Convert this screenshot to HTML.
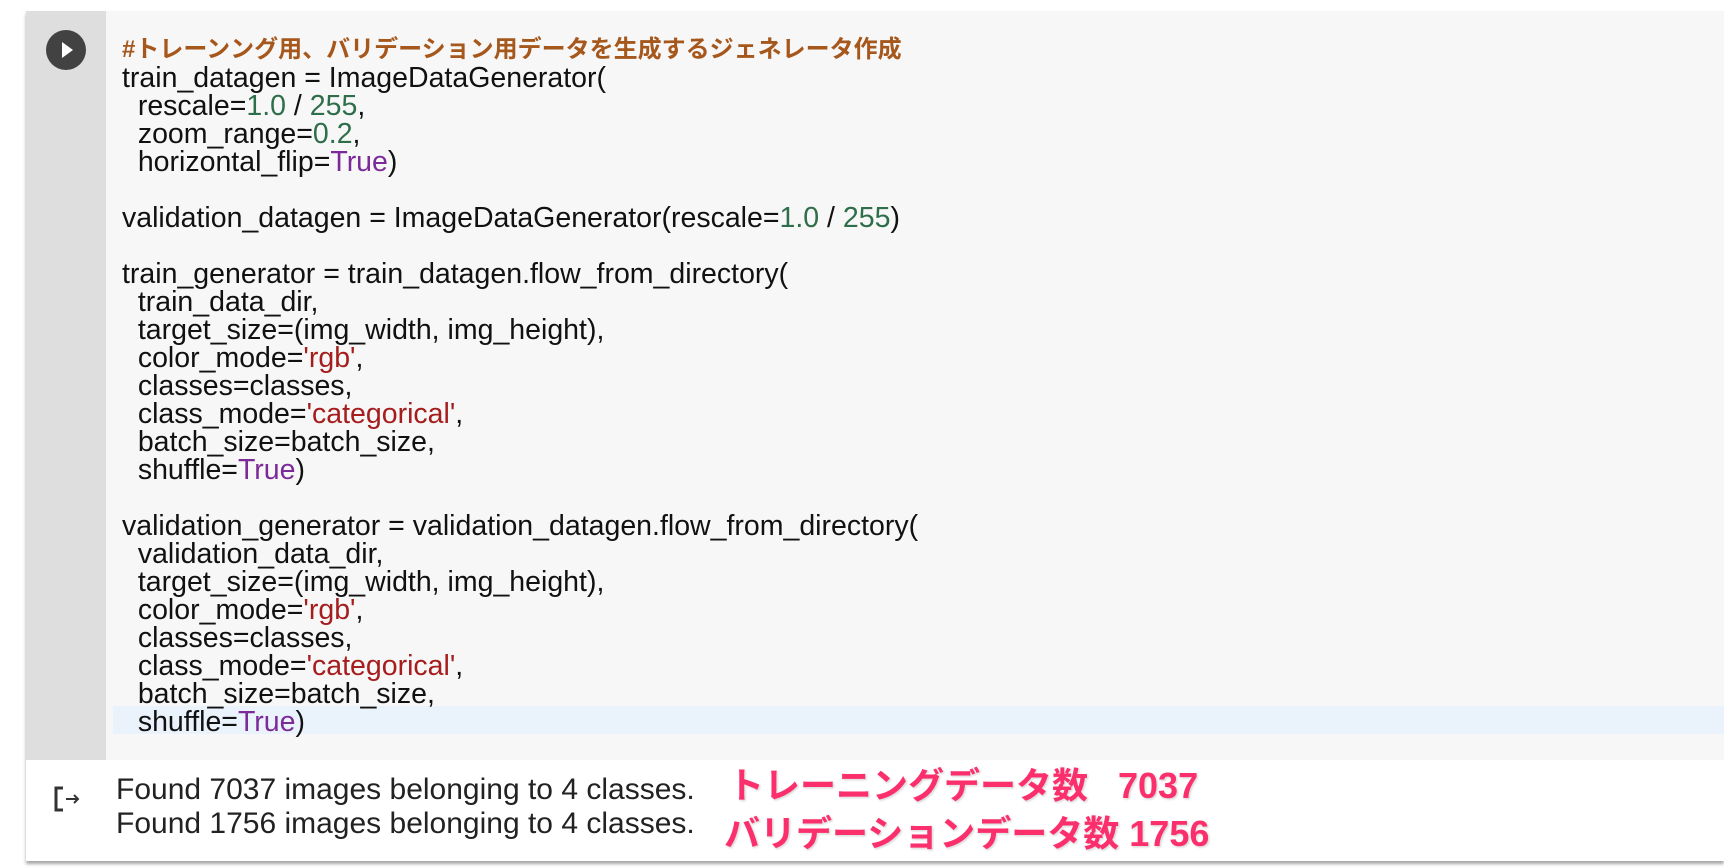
<!DOCTYPE html>
<html><head><meta charset="utf-8"><style>
html,body{margin:0;padding:0;background:#fff;width:1724px;height:868px;overflow:hidden}
.cell{position:absolute;left:26px;top:11px;right:0;height:850px;background:#fff;box-shadow:0 3px 3px rgba(0,0,0,.35)}
.gut{position:absolute;left:26px;top:11px;width:80px;height:749px;background:#dedede}
.code{position:absolute;left:106px;top:11px;right:0;height:749px;background:#f7f7f7}
.hl{position:absolute;left:113px;top:706px;right:0;height:28px;background:#eaf2fc}
.play{position:absolute;left:46px;top:30px;width:40px;height:40px;border-radius:50%;background:#424242}
.play:after{content:"";position:absolute;left:16px;top:12px;border-left:11px solid #fff;border-top:8px solid transparent;border-bottom:8px solid transparent}
pre{position:absolute;left:122px;top:34px;margin:0;font-family:"Liberation Sans","Noto Sans CJK JP",sans-serif;font-size:28.5px;line-height:28px;color:#111}
.c{color:#a6571c;font-size:24px;font-weight:bold;letter-spacing:0px}.n{color:#2e6e4a}.k{color:#7b2a98}.s{color:#a51d1d}
.out{position:absolute;left:116px;top:773px;font-family:"Liberation Sans",sans-serif;font-size:30px;line-height:34px;color:#222}
.lab{position:absolute;font-family:"Liberation Sans","Noto Sans CJK JP",sans-serif;font-weight:bold;font-size:36px;color:#fb2f6c;text-shadow:0 0 3px #fff,1px 1px 2px #bbb,-1px -1px 2px #fff;white-space:pre}
.ico{position:absolute;left:54px;top:786px}
</style></head><body>
<div class="cell"></div>
<div class="gut"></div>
<div class="code"></div>
<div class="hl"></div>
<div class="play"></div>
<pre><span class="c">#トレーンング用、バリデーション用データを生成するジェネレータ作成</span>
train_datagen = ImageDataGenerator(
  rescale=<span class="n">1.0</span> / <span class="n">255</span>,
  zoom_range=<span class="n">0.2</span>,
  horizontal_flip=<span class="k">True</span>)

validation_datagen = ImageDataGenerator(rescale=<span class="n">1.0</span> / <span class="n">255</span>)

train_generator = train_datagen.flow_from_directory(
  train_data_dir,
  target_size=(img_width, img_height),
  color_mode=<span class="s">'rgb'</span>,
  classes=classes,
  class_mode=<span class="s">'categorical'</span>,
  batch_size=batch_size,
  shuffle=<span class="k">True</span>)

validation_generator = validation_datagen.flow_from_directory(
  validation_data_dir,
  target_size=(img_width, img_height),
  color_mode=<span class="s">'rgb'</span>,
  classes=classes,
  class_mode=<span class="s">'categorical'</span>,
  batch_size=batch_size,
  shuffle=<span class="k">True</span>)</pre>
<svg class="ico" width="30" height="26" viewBox="0 0 30 26"><path d="M9 2H2V24H9" fill="none" stroke="#333" stroke-width="3"/><path d="M12 13H24M20 9L24 13L20 17" fill="none" stroke="#333" stroke-width="2"/></svg>
<div class="out">Found 7037 images belonging to 4 classes.<br>Found 1756 images belonging to 4 classes.</div>
<div class="lab" style="left:728px;top:757px">トレーニングデータ数   7037</div>
<div class="lab" style="left:724px;top:805px">バリデーションデータ数 1756</div>
</body></html>
